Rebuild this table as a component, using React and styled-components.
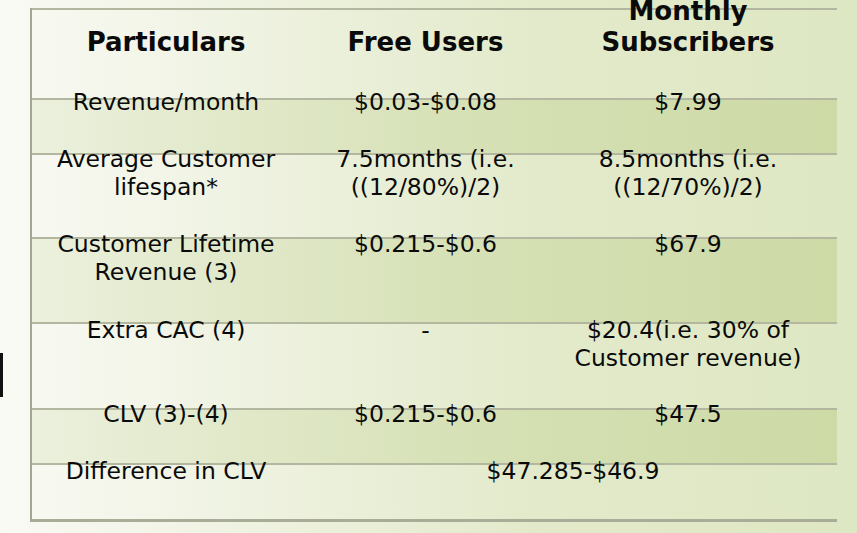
import React from 'react';
import styled, { createGlobalStyle } from 'styled-components';

const GlobalStyle = createGlobalStyle`
  html, body {
    margin: 0;
    padding: 0;
  }
  body {
    font-family: "DejaVu Sans", "Liberation Sans", sans-serif;
    color: #000;
  }
`;

// Styled Components
const Page = styled.div`
  width: 857px;
  height: 533px;
  overflow: hidden;
  display: flex;
  align-items: flex-start;
  background: linear-gradient(90deg, #f9faf4 0%, #eef2e0 30%, #e3eacb 62%, #dee7c3 100%);
`;

const Marker = styled.div`
  width: 3px;
  height: 44px;
  margin-top: 353px;
  margin-right: 27px;
  background: #111;
  flex-shrink: 0;
`;

const Table = styled.div`
  margin-top: 8px;
  width: 805px;
  display: flex;
  flex-direction: column;
  border-left: 2px solid #a3a694;
  border-bottom: 3px solid #a9ad98;
`;

const Row = styled.div`
  height: ${({ h }) => h}px;
  display: grid;
  grid-template-columns: 268px 251px 284px;
  grid-template-rows: minmax(0, 1fr);
  border-top: 2px solid #b3b7a0;
  box-sizing: border-box;
  background: ${({ shade }) =>
    shade
      ? 'linear-gradient(90deg, rgba(200, 214, 160, 0.25) 0%, rgba(194, 210, 146, 0.4) 50%, rgba(188, 206, 138, 0.5) 100%)'
      : 'transparent'};
`;

const Cell = styled.div`
  display: flex;
  justify-content: center;
  align-items: ${({ head }) => (head ? 'flex-end' : 'flex-start')};
  padding-bottom: ${({ head }) => (head ? '40px' : '0')};
  padding-left: ${({ padL }) => padL || 0}px;
  padding-right: ${({ padR }) => padR || 0}px;
  grid-column: ${({ span }) => (span ? `span ${span}` : 'auto')};
  min-width: 0;
  min-height: 0;
`;

const Text = styled.div`
  text-align: center;
  font-size: ${({ head }) => (head ? '26px' : '23.5px')};
  font-weight: ${({ head }) => (head ? 700 : 400)};
  line-height: ${({ head }) => (head ? '31px' : '28px')};
  margin-top: ${({ shift }) => (shift ? `-${shift}px` : '0')};
  color: #0a0a0a;
  white-space: pre-line;
  flex-shrink: 0;
`;

const rows = [
  { h: 55, shade: true, shift: 12, cells: ['Revenue/month', '$0.03-$0.08', '$7.99'] },
  {
    h: 84,
    shift: 10,
    cells: ['Average Customer\nlifespan*', '7.5months (i.e.\n((12/80%)/2)', '8.5months (i.e.\n((12/70%)/2)'],
  },
  { h: 85, shade: true, shift: 9, cells: ['Customer Lifetime\nRevenue (3)', '$0.215-$0.6', '$67.9'] },
  { h: 86, shift: 8, cells: ['Extra CAC (4)', '-', '$20.4(i.e. 30% of\nCustomer revenue)'] },
  { h: 55, shade: true, shift: 10, cells: ['CLV (3)-(4)', '$0.215-$0.6', '$47.5'] },
];

function App() {
  return (
    <Page>
      <GlobalStyle />
      <Marker />
      <Table>
        {/* Header */}
        <Row h={90}>
          {['Particulars', 'Free Users', 'Monthly\nSubscribers'].map((t, j) => (
            <Cell key={t} head padR={j === 2 ? 10 : 0}>
              <Text head>{t}</Text>
            </Cell>
          ))}
        </Row>

        {/* Body rows */}
        {rows.map((r, i) => (
          <Row key={i} h={r.h} shade={r.shade}>
            {r.cells.map((t, j) => (
              <Cell key={j} padR={j === 2 ? 10 : 0}>
                <Text shift={r.shift}>{t}</Text>
              </Cell>
            ))}
          </Row>
        ))}

        {/* Last row: merged value */}
        <Row h={56}>
          <Cell>
            <Text shift={8}>Difference in CLV</Text>
          </Cell>
          <Cell span={2} padL={11}>
            <Text shift={8}>$47.285-$46.9</Text>
          </Cell>
        </Row>
      </Table>
    </Page>
  );
}

export default App;
